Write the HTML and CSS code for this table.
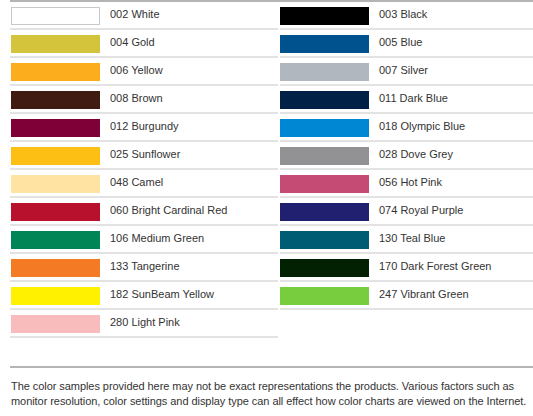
FILE: index.html
```html
<!DOCTYPE html>
<html>
<head>
<meta charset="utf-8">
<link rel="stylesheet" href="styles.css">
</head>
<body>
<div class="page">
  <div class="chart">
    <ul class="col col-left">
      <li class="row"><span class="sw sw-white"></span><span class="name">002 White</span></li>
      <li class="row"><span class="sw" style="background:#d4c43b"></span><span class="name">004 Gold</span></li>
      <li class="row"><span class="sw" style="background:#fcad1e"></span><span class="name">006 Yellow</span></li>
      <li class="row"><span class="sw" style="background:#3f1b11"></span><span class="name">008 Brown</span></li>
      <li class="row"><span class="sw" style="background:#7e0036"></span><span class="name">012 Burgundy</span></li>
      <li class="row"><span class="sw" style="background:#fdbf14"></span><span class="name">025 Sunflower</span></li>
      <li class="row"><span class="sw" style="background:#fee3a3"></span><span class="name">048 Camel</span></li>
      <li class="row"><span class="sw" style="background:#b8112e"></span><span class="name">060 Bright Cardinal Red</span></li>
      <li class="row"><span class="sw" style="background:#008557"></span><span class="name">106 Medium Green</span></li>
      <li class="row"><span class="sw" style="background:#f47a24"></span><span class="name">133 Tangerine</span></li>
      <li class="row"><span class="sw" style="background:#fff100"></span><span class="name">182 SunBeam Yellow</span></li>
      <li class="row"><span class="sw" style="background:#f9bcbd"></span><span class="name">280 Light Pink</span></li>
    </ul>
    <ul class="col col-right">
      <li class="row"><span class="sw" style="background:#000000"></span><span class="name">003 Black</span></li>
      <li class="row"><span class="sw" style="background:#00528e"></span><span class="name">005 Blue</span></li>
      <li class="row"><span class="sw" style="background:#b1b7be"></span><span class="name">007 Silver</span></li>
      <li class="row"><span class="sw" style="background:#002145"></span><span class="name">011 Dark Blue</span></li>
      <li class="row"><span class="sw" style="background:#0087d3"></span><span class="name">018 Olympic Blue</span></li>
      <li class="row"><span class="sw" style="background:#929294"></span><span class="name">028 Dove Grey</span></li>
      <li class="row"><span class="sw" style="background:#c54b75"></span><span class="name">056 Hot Pink</span></li>
      <li class="row"><span class="sw" style="background:#211f70"></span><span class="name">074 Royal Purple</span></li>
      <li class="row"><span class="sw" style="background:#005c72"></span><span class="name">130 Teal Blue</span></li>
      <li class="row"><span class="sw" style="background:#012102"></span><span class="name">170 Dark Forest Green</span></li>
      <li class="row"><span class="sw" style="background:#77cd3e"></span><span class="name">247 Vibrant Green</span></li>
    </ul>
  </div>
  <hr class="rule">
  <p class="note">The color samples provided here may not be exact representations the products. Various factors such as monitor resolution, color settings and display type can all effect how color charts are viewed on the Internet.</p>
</div>
</body>
</html>
```

FILE: styles.css
```css
html, body {
  margin: 0;
  padding: 0;
  background: #ffffff;
}
body {
  font-family: "Liberation Sans", Arial, sans-serif;
  font-size: 11px;
  color: #333333;
}
.page {
  padding-left: 10px;
}
.chart {
  display: grid;
  grid-template-columns: 270px 1fr;
  border-top: 2px solid #b4b4b4;
}
.col {
  list-style: none;
  margin: 0;
  padding: 0;
}
.row {
  display: flex;
  align-items: flex-start;
  height: 26px;
  border-bottom: 2px solid #e3e3e3;
}
.col-left .row {
  margin-right: 2px;
}
.sw {
  display: block;
  width: 89px;
  height: 18px;
  margin-top: 5px;
  flex: none;
  box-sizing: border-box;
}
.col-left .sw {
  margin-left: 1px;
}
.sw-white {
  background: #ffffff;
  border: 1px solid #c8c8c8;
}
.name {
  margin-left: 10px;
  margin-top: 6px;
  line-height: 13px;
}
.rule {
  margin: 28px 0 0 0;
  border: 0;
  border-top: 2px solid #b4b4b4;
  height: 0;
}
.note {
  margin: 11px 0 0 1px;
  line-height: 15px;
  letter-spacing: -0.06px;
  color: #333333;
}
```
